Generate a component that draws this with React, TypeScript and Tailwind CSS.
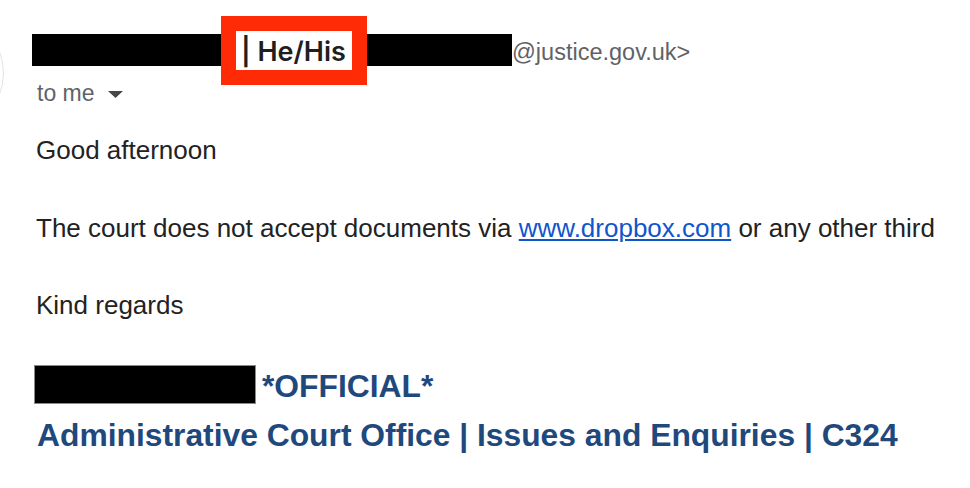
export default function App() {
  return (
    <div className="w-[970px] h-[488px] bg-white overflow-hidden flex font-['Liberation_Sans',Arial,sans-serif]">
      {/* avatar edge peeking in from the left */}
      <div className="shrink-0 w-[120px] h-[120px] ml-[-116px] mt-[13px] rounded-full border border-[#e3e3e3]" />

      <div className="flex flex-col pl-[28px] pt-[15px]">
        {/* sender line */}
        <div className="flex items-center h-[69px]">
          <div className="relative w-[480px] h-[32px] bg-black">
            <div className="absolute left-[189px] top-[-18px] w-[146px] h-[69px] border-[15px] border-[#ff2b06] bg-white flex items-center pl-[5px]">
              <span className="font-['Inter',sans-serif] font-semibold text-[27px] leading-none text-[#1f1f1f] mt-[3px]">
                | He/His
              </span>
            </div>
          </div>
          <span className="text-[23.5px] leading-none text-[#5f6368] mt-[6px]">@justice.gov.uk&gt;</span>
        </div>

        <div className="flex items-center ml-[5px] mt-[-2.5px] text-[23px] leading-none text-[#5f6368]">
          <span>to me</span>
          <svg width="15" height="7" viewBox="0 0 15 7" className="ml-[13px] mt-[2px]">
            <path d="M0 0 L15 0 L7.5 7 Z" fill="#444746" />
          </svg>
        </div>

        {/* body */}
        <div className="ml-[4px] text-[26px] leading-none text-[#222222]">
          <p className="mt-[32px]">Good afternoon</p>
          <p className="mt-[52px] whitespace-nowrap">
            The court does not accept documents via{" "}
            <a href="#" className="text-[#1155cc] underline">
              www.dropbox.com
            </a>{" "}
            or any other third
          </p>
          <p className="mt-[51.5px]">Kind regards</p>
        </div>

        {/* signature */}
        <div className="flex items-end ml-[2px] mt-[47px]">
          <div className="w-[222px] h-[39px] bg-black border border-[#8a8a8a]" />
          <span className="ml-[6px] mb-[1px] text-[31.8px] leading-none font-bold text-[#1f497d]">*OFFICIAL*</span>
        </div>
        <p className="ml-[5px] mt-[15.5px] text-[31.8px] leading-none font-bold text-[#1f497d] whitespace-nowrap">
          Administrative Court Office | Issues and Enquiries | C324
        </p>
      </div>
    </div>
  );
}
